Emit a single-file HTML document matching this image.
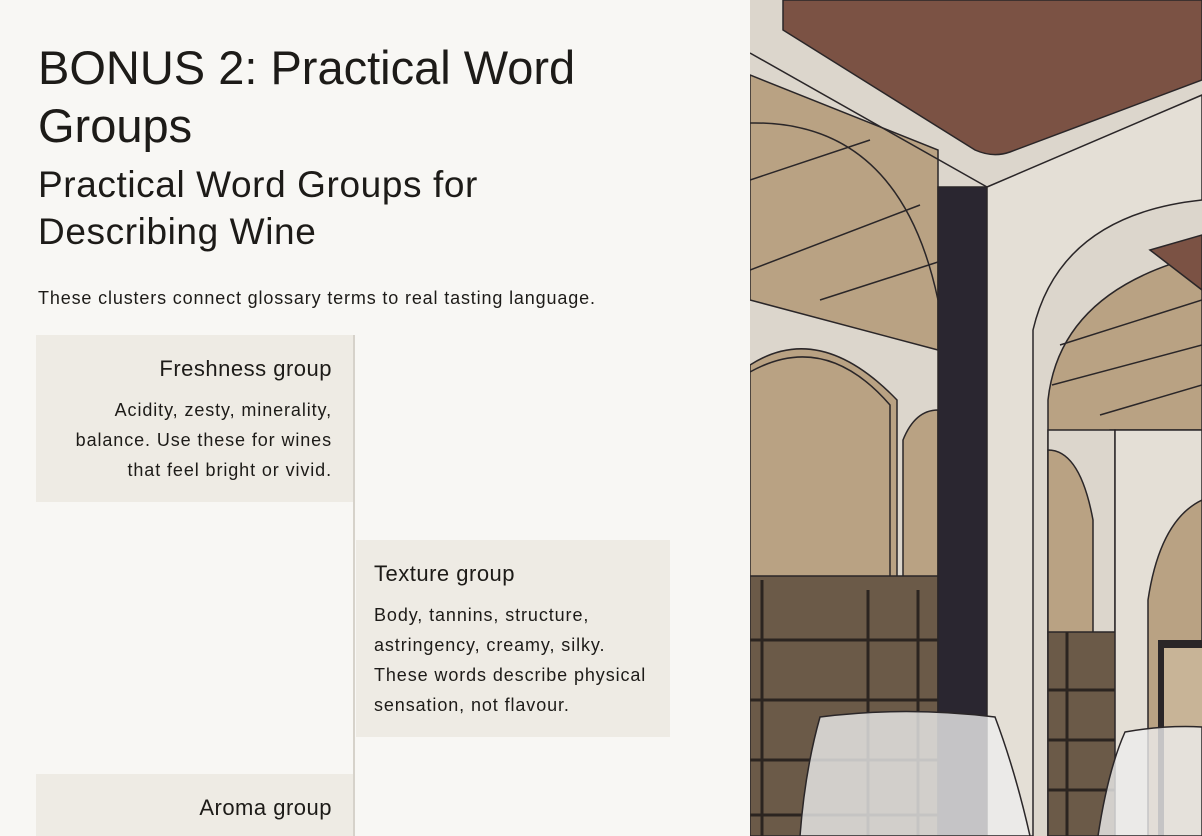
<!DOCTYPE html>
<html><head><meta charset="utf-8"><style>
*{margin:0;padding:0;box-sizing:border-box}
html,body{width:1202px;height:836px;overflow:hidden;background:#f8f7f4;font-family:"Liberation Sans",sans-serif;color:#1d1b18}
.t{position:absolute;white-space:nowrap}
.h1{font-size:47px;letter-spacing:0px}
.h2{font-size:37px;letter-spacing:0.6px}
.box{position:absolute;background:#eeebe4}
.bh{font-size:22px;letter-spacing:0.5px}
.bp{font-size:18px;line-height:30px;letter-spacing:0.9px}
</style></head><body>
<div class="t h1" style="left:38px;top:40px">BONUS 2: Practical Word</div>
<div class="t h1" style="left:38px;top:98px">Groups</div>
<div class="t h2" style="left:38px;top:164px">Practical Word Groups for</div>
<div class="t h2" style="left:38px;top:211px">Describing Wine</div>
<div class="t" style="left:38px;top:288px;font-size:18px;letter-spacing:0.85px">These clusters connect glossary terms to real tasting language.</div>

<div style="position:absolute;left:353px;top:335px;width:2px;height:501px;background:#d6d2ca"></div>

<div class="box" style="left:36px;top:335px;width:317px;height:167px"></div>
<div class="t bh" style="right:870px;top:356px">Freshness group</div>
<div class="t bp" style="right:870px;top:395px;text-align:right">Acidity, zesty, minerality,<br>balance. Use these for wines<br>that feel bright or vivid.</div>

<div class="box" style="left:356px;top:540px;width:314px;height:197px"></div>
<div class="t bh" style="left:374px;top:561px">Texture group</div>
<div class="t bp" style="left:374px;top:600px">Body, tannins, structure,<br>astringency, creamy, silky.<br>These words describe physical<br>sensation, not flavour.</div>

<div class="box" style="left:36px;top:774px;width:317px;height:62px"></div>
<div class="t bh" style="right:870px;top:795px">Aroma group</div>

<svg style="position:absolute;left:750px;top:0" width="452" height="836" viewBox="750 0 452 836">
<g stroke="#2a2628" stroke-width="1.5">
<rect x="750" y="0" width="452" height="836" fill="#dcd6cc" stroke="none"/>
<path d="M750,75 L938,150 L938,350 L750,300 Z" fill="#b9a283"/>
<path d="M750,123 Q900,120 938,300" fill="none"/>
<path d="M750,180 L870,140 M750,270 L920,205 M820,300 L938,262" fill="none"/>
<path d="M783,0 L1202,0 L1202,80 L1010,152 Q993,158 975,150 L783,30 Z" fill="#7b5244"/>
<path d="M750,53 L987,187" fill="none"/>
<path d="M750,580 V365 Q820,320 897,400 V580 Z" fill="#b9a283"/>
<path d="M750,372 Q825,330 890,405 V580" fill="none"/>
<path d="M903,580 V440 Q915,410 938,410 V580 Z" fill="#b9a283"/>
<rect x="750" y="576" width="188" height="260" fill="#6b5a48"/>
<g stroke="#2b2420" stroke-width="3">
<path d="M750,640 H938 M750,700 H938 M750,760 H938 M750,815 H938 M762,580 V836 M868,590 V836 M918,590 V836"/>
</g>
<rect x="938" y="187" width="49" height="649" fill="#2a2630"/>
<path d="M987,187 L1202,95 L1202,200 Q1060,215 1033,330 V836 H987 Z" fill="#e4dfd6"/>
<path d="M1048,836 V400 Q1060,290 1202,255 L1202,430 L1110,430 Z" fill="#b9a283"/>
<path d="M1150,250 L1202,235 L1202,290 Z" fill="#7b5244"/>
<path d="M1060,345 L1202,300 M1052,385 L1202,345 M1100,415 L1202,385" fill="none"/>
<path d="M1048,430 H1115 V836 H1048 Z" fill="#dcd6cc"/>
<path d="M1048,640 V450 Q1080,450 1093,520 V640 Z" fill="#b9a283"/>
<rect x="1048" y="632" width="70" height="204" fill="#6b5a48"/>
<g stroke="#2b2420" stroke-width="3"><path d="M1048,690 H1118 M1048,740 H1118 M1048,790 H1118 M1067,632 V836"/></g>
<path d="M1115,430 H1202 V836 H1115 Z" fill="#e4dfd6"/>
<path d="M1148,836 V600 Q1160,520 1202,500 V836 Z" fill="#b9a283"/>
<rect x="1158" y="640" width="44" height="196" fill="#2a2628" stroke="none"/>
<rect x="1164" y="648" width="38" height="188" fill="#c8b497" stroke="none"/>
<path d="M820,717 Q905,706 995,717 Q1015,770 1030,836 H800 Q805,770 820,717 Z" fill="#ececec" fill-opacity="0.8"/>
<path d="M1125,732 Q1165,725 1202,727 V836 H1098 Q1108,770 1125,732 Z" fill="#ececec" fill-opacity="0.8"/>
</g>
</svg>
</body></html>
